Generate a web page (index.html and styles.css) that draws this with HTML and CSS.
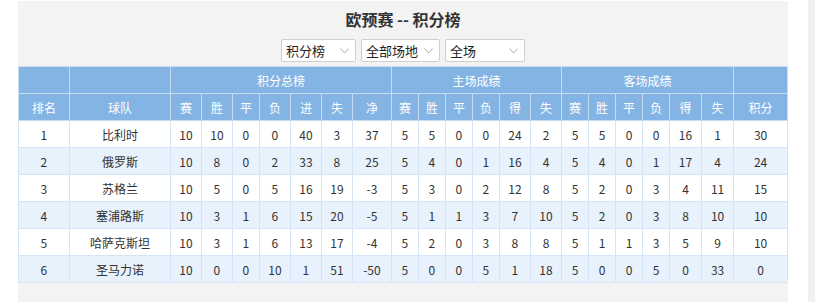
FILE: index.html
```html
<!DOCTYPE html>
<html lang="zh">
<head>
<meta charset="utf-8">
<title>欧预赛 -- 积分榜</title>
<link rel="stylesheet" href="styles.css">
</head>
<body>
<div class="page">
  <div class="wrap">
    <div class="title">欧预赛 -- 积分榜</div>
    <div class="filters">
      <div class="sel sel-1"><span>积分榜</span><svg class="chev" width="9" height="6" viewBox="0 0 9 6"><path d="M0.5 0.5 L4.5 5 L8.5 0.5" fill="none" stroke="#a9a9a9" stroke-width="1"/></svg></div>
      <div class="sel sel-2"><span>全部场地</span><svg class="chev" width="9" height="6" viewBox="0 0 9 6"><path d="M0.5 0.5 L4.5 5 L8.5 0.5" fill="none" stroke="#a9a9a9" stroke-width="1"/></svg></div>
      <div class="sel sel-3"><span>全场</span><svg class="chev" width="9" height="6" viewBox="0 0 9 6"><path d="M0.5 0.5 L4.5 5 L8.5 0.5" fill="none" stroke="#a9a9a9" stroke-width="1"/></svg></div>
    </div>
    <table class="standings">
      <colgroup>
        <col class="c-rank"><col class="c-team">
        <col class="c31"><col class="c31"><col class="c27"><col class="c31"><col class="c31"><col class="c31"><col class="c39">
        <col class="c27"><col class="c27"><col class="c27"><col class="c27"><col class="c31"><col class="c31">
        <col class="c27"><col class="c27"><col class="c27"><col class="c27"><col class="c32"><col class="c32">
        <col class="c-pts">
      </colgroup>
      <thead>
        <tr>
          <th></th><th></th>
          <th colspan="7">积分总榜</th>
          <th colspan="6">主场成绩</th>
          <th colspan="6">客场成绩</th>
          <th></th>
        </tr>
        <tr>
          <th>排名</th><th>球队</th>
          <th>赛</th><th>胜</th><th>平</th><th>负</th><th>进</th><th>失</th><th>净</th>
          <th>赛</th><th>胜</th><th>平</th><th>负</th><th>得</th><th>失</th>
          <th>赛</th><th>胜</th><th>平</th><th>负</th><th>得</th><th>失</th>
          <th>积分</th>
        </tr>
      </thead>
      <tbody>
        <tr><td>1</td><td class="team">比利时</td><td>10</td><td>10</td><td>0</td><td>0</td><td>40</td><td>3</td><td>37</td><td>5</td><td>5</td><td>0</td><td>0</td><td>24</td><td>2</td><td>5</td><td>5</td><td>0</td><td>0</td><td>16</td><td>1</td><td>30</td></tr>
        <tr><td>2</td><td class="team">俄罗斯</td><td>10</td><td>8</td><td>0</td><td>2</td><td>33</td><td>8</td><td>25</td><td>5</td><td>4</td><td>0</td><td>1</td><td>16</td><td>4</td><td>5</td><td>4</td><td>0</td><td>1</td><td>17</td><td>4</td><td>24</td></tr>
        <tr><td>3</td><td class="team">苏格兰</td><td>10</td><td>5</td><td>0</td><td>5</td><td>16</td><td>19</td><td>-3</td><td>5</td><td>3</td><td>0</td><td>2</td><td>12</td><td>8</td><td>5</td><td>2</td><td>0</td><td>3</td><td>4</td><td>11</td><td>15</td></tr>
        <tr><td>4</td><td class="team">塞浦路斯</td><td>10</td><td>3</td><td>1</td><td>6</td><td>15</td><td>20</td><td>-5</td><td>5</td><td>1</td><td>1</td><td>3</td><td>7</td><td>10</td><td>5</td><td>2</td><td>0</td><td>3</td><td>8</td><td>10</td><td>10</td></tr>
        <tr><td>5</td><td class="team">哈萨克斯坦</td><td>10</td><td>3</td><td>1</td><td>6</td><td>13</td><td>17</td><td>-4</td><td>5</td><td>2</td><td>0</td><td>3</td><td>8</td><td>8</td><td>5</td><td>1</td><td>1</td><td>3</td><td>5</td><td>9</td><td>10</td></tr>
        <tr><td>6</td><td class="team">圣马力诺</td><td>10</td><td>0</td><td>0</td><td>10</td><td>1</td><td>51</td><td>-50</td><td>5</td><td>0</td><td>0</td><td>5</td><td>1</td><td>18</td><td>5</td><td>0</td><td>0</td><td>5</td><td>0</td><td>33</td><td>0</td></tr>
      </tbody>
    </table>
  </div>
  <div class="scrollbar"></div>
</div>
</body>
</html>
```

FILE: styles.css
```css
html, body {
  margin: 0;
  padding: 0;
  background: #ffffff;
}

body {
  font-family: "Noto Sans CJK SC", "Noto Sans", "DejaVu Sans", sans-serif;
  color: #333333;
}

.page {
  display: flex;
  height: 302px;
  overflow: hidden;
}

.wrap {
  margin: 1px 0 0 18px;
  width: 770px;
  background: #f3f3f3;
  display: flex;
  flex-direction: column;
  align-items: center;
}

.scrollbar {
  margin-left: auto;
  width: 7px;
  height: 302px;
  background: #f1f1f1;
}

.title {
  height: 36px;
  line-height: 36px;
  font-size: 16px;
  font-weight: bold;
  color: #333333;
}

.filters {
  margin-top: 2px;
  margin-bottom: 4px;
  display: flex;
  gap: 5px;
  height: 23px;
}

.sel {
  box-sizing: border-box;
  height: 23px;
  background: #ffffff;
  border: 1px solid #cfcfcf;
  border-radius: 2px;
  display: flex;
  align-items: center;
  justify-content: space-between;
  padding: 0 6px 0 4px;
  font-size: 13px;
  color: #222222;
}

.sel-1 { width: 75px; }
.sel-2 { width: 79px; }
.sel-3 { width: 80px; }

.chev {
  display: block;
}

.standings {
  width: 770px;
  border-collapse: collapse;
  table-layout: fixed;
  border: 1px solid #8eb4e2;
  font-size: 12px;
}

.c-rank { width: 51px; }
.c-team { width: 101px; }
.c27 { width: 27px; }
.c31 { width: 31px; }
.c32 { width: 32px; }
.c39 { width: 39px; }
.c-pts { width: 54px; }

.standings th {
  height: 26px;
  padding: 0;
  background: #84b4e4;
  color: #ffffff;
  font-weight: normal;
  font-size: 12px;
  text-align: center;
  border: 1px solid #c6dcf3;
}

.standings td {
  height: 26px;
  padding: 0;
  text-align: center;
  color: #333333;
  border: 1px solid #d5e5f6;
  background: #ffffff;
}

.standings tbody tr:nth-child(even) td {
  background: #e8f2fd;
}

.standings td.team {
  font-size: 12px;
}
```
